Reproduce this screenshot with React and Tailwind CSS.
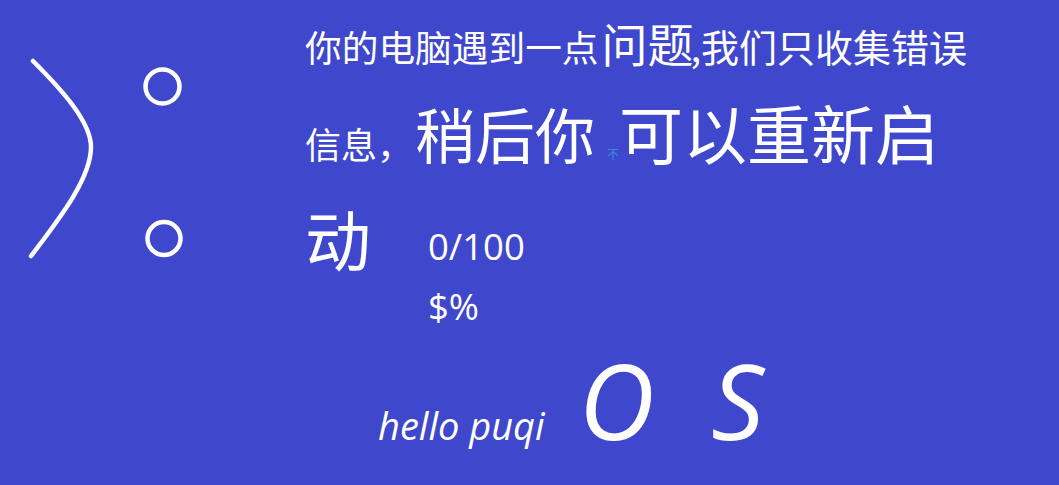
import React from "react"

const cjk = "font-['Noto_Sans_CJK_SC','Noto_Sans',sans-serif]"

// Sad face, rotated like the blue screen one
function Face() {
  return (
    <svg width="305" height="300" viewBox="0 0 305 300" fill="none" stroke="white" className="block shrink-0">
      <path d="M33 21 C 62 50, 91 82, 91 107 C 91 138, 60 178, 31 216" strokeWidth="4.5" strokeLinecap="round" />
      <circle cx="162.5" cy="46.5" r="17" strokeWidth="4.5" />
      <circle cx="164" cy="198.5" r="16.5" strokeWidth="4.5" />
    </svg>
  )
}

export default function App() {
  return (
    <div className={`w-[1059px] h-[485px] overflow-hidden bg-[#3f48cc] text-white ${cjk}`}>
      <div className="flex pt-10">
        <Face />
        <div className="flex flex-col -mt-[32px]">
          <div className="flex items-baseline h-[68px] whitespace-nowrap">
            <span className="text-[36.7px] leading-[68px]">你的电脑遇到一点</span>
            <span className="text-[46px] leading-[68px] ml-[3px]">问题</span>
            <span className="text-[38px] leading-[68px] ml-[-3px]">,我们只收集错误</span>
          </div>
          <div className="flex items-baseline h-[84px] mt-[13px] whitespace-nowrap">
            <span className="text-[36px] leading-[84px] w-[110px]">信息，</span>
            <span className="text-[60px] leading-[84px]">稍后你</span>
            <span className="text-[12px] text-[#3b8be0] w-[24px] pl-[12px]">不</span>
            <span className="text-[64px] leading-[84px]">可以重新启</span>
          </div>
          <div className="flex mt-[22px]">
            <span className="text-[66px] leading-[84px] w-[123px]">动</span>
            <div className="flex flex-col pt-[21px] font-['Open_Sans',sans-serif] text-[36.5px] leading-[60px]">
              <span>0/100</span>
              <span>$%</span>
            </div>
          </div>
        </div>
      </div>
      <div className="flex items-baseline pl-[378px] mt-[7px] font-['Open_Sans',sans-serif] italic whitespace-nowrap">
        <span className="text-[38px]">hello puqi</span>
        <span className="text-[105px] leading-none ml-[34px]">O</span>
        <span className="text-[105px] leading-none ml-[57px]">S</span>
      </div>
    </div>
  )
}
